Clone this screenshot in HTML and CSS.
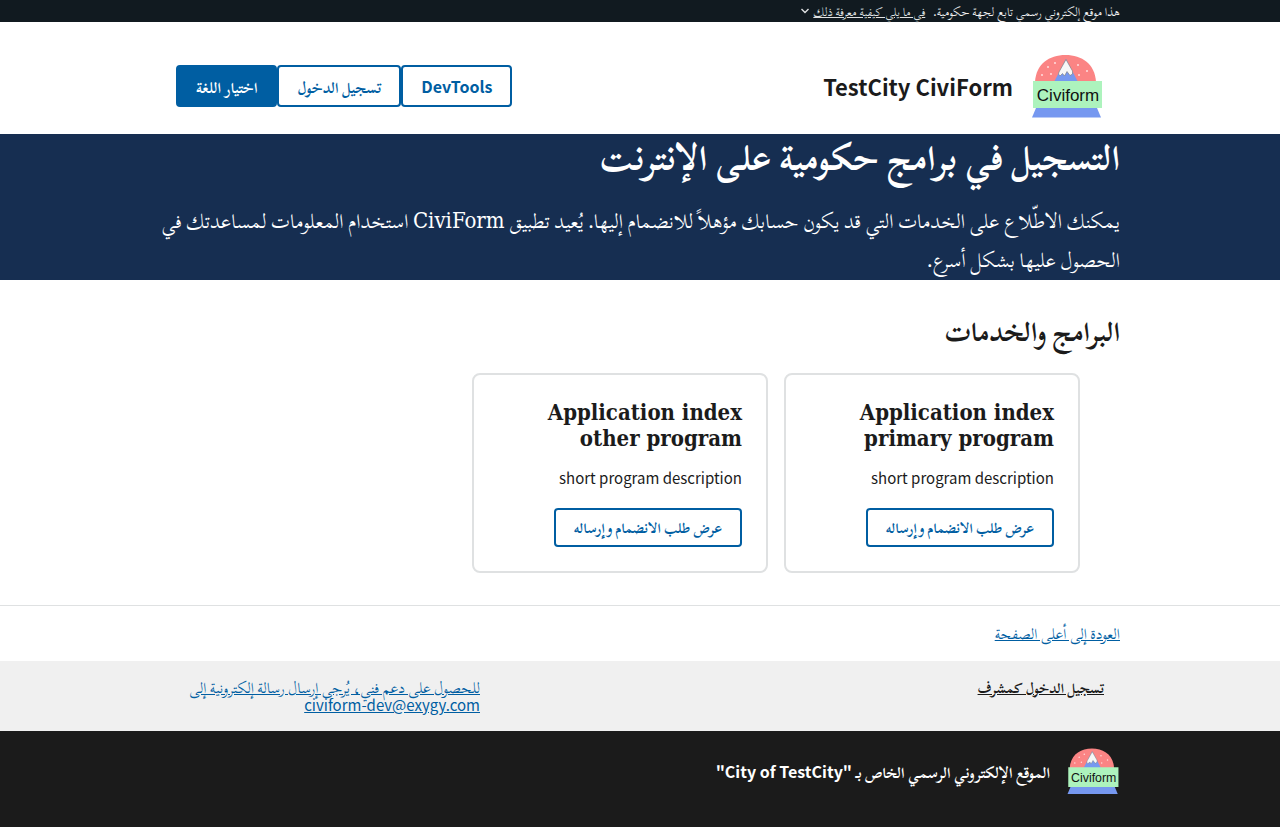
FILE: index.html
```html
<!DOCTYPE html>
<html lang="ar" dir="rtl">
<head>
<meta charset="utf-8">
<meta name="viewport" content="width=device-width, initial-scale=1">
<title>TestCity CiviForm</title>
<link rel="stylesheet" href="styles.css">
</head>
<body>
<div class="banner">
  <div class="container banner-row">
    <span>هذا موقع إلكتروني رسمي تابع لجهة حكومية.</span>
    <button type="button" class="banner-toggle"><span>في ما يلي كيفية معرفة ذلك</span><svg viewBox="0 0 8 6" width="8" height="6" aria-hidden="true"><path d="M.5 1 4 4.500 7.500 1" fill="none" stroke="currentColor" stroke-width="1.400"/></svg></button>
  </div>
</div>
<header class="container header">
  <a href="#" class="brand">
    <svg class="logo" viewBox="0 0 72 66" role="img" aria-label="Civiform">
      <path d="M4 29C5 11 18 2 34.500 2S64 11 65 29z" fill="#fb8484"/>
      <path d="M23 29 35 6l12 23z" fill="#7698f0"/>
      <path d="m28 19 7-12.500L41.500 18v3l-2.500 1.500-3-4-2.500 4.500-2-2.500-2.500 2.500-1.500-2z" fill="#f7f7f7" stroke="#777" stroke-width=".6"/>
      <g fill="#ffdede"><circle cx="24" cy="10" r="1"/><circle cx="17" cy="14" r="1"/><circle cx="20" cy="21" r="1"/><circle cx="11" cy="22" r="1"/><circle cx="47" cy="12" r="1"/><circle cx="56" cy="18" r="1"/><circle cx="48" cy="22" r="1"/></g>
      <path d="M5 55h61l4 9.500H1z" fill="#7698f0"/>
      <path d="M2 28h69v27H2z" fill="#adf3bd"/>
      <text x="37" y="48" text-anchor="middle" direction="ltr" class="logo-text">Civiform</text>
    </svg>
    <span>TestCity CiviForm</span>
  </a>
  <nav class="actions">
    <button type="button" class="button latin">DevTools</button>
    <button type="button" class="button">تسجيل الدخول</button>
    <button type="button" class="button solid">اختيار اللغة</button>
  </nav>
</header>
<main>
  <section class="hero">
    <div class="container">
      <h1>التسجيل في برامج حكومية على الإنترنت</h1>
      <p>يمكنك الاطّلاع على الخدمات التي قد يكون حسابك مؤهلاً للانضمام إليها. يُعيد تطبيق <span class="product">CiviForm</span> استخدام المعلومات لمساعدتك في الحصول عليها بشكل أسرع.</p>
    </div>
  </section>
  <section class="container programs">
    <h2>البرامج والخدمات</h2>
    <ul class="cards">
      <li class="card">
        <h3>Application index primary program</h3>
        <p>short program description</p>
        <a href="#" class="button">عرض طلب الانضمام وإرساله</a>
      </li>
      <li class="card">
        <h3>Application index other program</h3>
        <p>short program description</p>
        <a href="#" class="button">عرض طلب الانضمام وإرساله</a>
      </li>
    </ul>
  </section>
</main>
<footer>
  <div class="return"><div class="container"><a href="#">العودة إلى أعلى الصفحة</a></div></div>
  <div class="links">
    <div class="container links-row">
      <a href="#" class="admin">تسجيل الدخول كمشرف</a>
      <a href="#" class="support">للحصول على دعم فني، يُرجى إرسال رسالة إلكترونية إلى <span class="email">civiform-dev@exygy.com</span></a>
    </div>
  </div>
  <div class="identity">
    <div class="container identity-row">
      <svg class="logo small" viewBox="0 0 72 66" role="img" aria-label="Civiform">
        <path d="M4 29C5 11 18 2 34.500 2S64 11 65 29z" fill="#fb8484"/>
        <path d="M23 29 35 6l12 23z" fill="#7698f0"/>
        <path d="m28 19 7-12.500L41.500 18v3l-2.500 1.500-3-4-2.500 4.500-2-2.500-2.500 2.500-1.500-2z" fill="#f7f7f7" stroke="#777" stroke-width=".6"/>
        <g fill="#ffdede"><circle cx="24" cy="10" r="1"/><circle cx="17" cy="14" r="1"/><circle cx="20" cy="21" r="1"/><circle cx="11" cy="22" r="1"/><circle cx="47" cy="12" r="1"/><circle cx="56" cy="18" r="1"/><circle cx="48" cy="22" r="1"/></g>
        <path d="M5 55h61l4 9.500H1z" fill="#7698f0"/>
        <path d="M2 28h69v27H2z" fill="#adf3bd"/>
        <text x="37" y="48" text-anchor="middle" direction="ltr" class="logo-text">Civiform</text>
      </svg>
      <p>الموقع الإلكتروني الرسمي الخاص بـ <span class="latin">"City of TestCity"</span></p>
    </div>
  </div>
</footer>
</body>
</html>
```
FILE: styles.css
```css
* { box-sizing: border-box; }
body {
  margin: 0;
  color: #1b1b1b;
  background: #fff;
  font-family: "Noto Sans CJK SC", "Scheherazade New", Scheherazade, Amiri, "Droid Arabic Naskh", "Noto Naskh Arabic", serif;
  font-size: 15px;
  line-height: 18px;
}
h1, h2, h3, p { margin: 0; }
a { color: #005ea2; }
.container { max-width: 1024px; margin: 0 auto; padding: 0 32px; }

.banner { background: #111a20; color: #f0f0f0; font-size: 12px; line-height: 14px; }
.banner-row { display: flex; gap: 8px; padding-top: 4px; padding-bottom: 4px; }
.banner-toggle {
  display: flex;
  align-items: center;
  gap: 4px;
  padding: 0;
  border: 0;
  background: none;
  color: #dfe1e2;
  font: inherit;
}
.banner-toggle span { text-decoration: underline; }

.header { display: flex; align-items: center; justify-content: space-between; padding-top: 31px; padding-bottom: 15px; }
.brand {
  display: flex;
  align-items: center;
  gap: 18px;
  padding-right: 17px;
  color: #1b1b1b;
  font-size: 22px;
  font-weight: 700;
  text-decoration: none;
}
.logo { width: 72px; height: 66px; flex: none; }
.logo-text { font: 17px "Liberation Sans", sans-serif; fill: #111; }
.actions { display: flex; padding-left: 16px; }
.button {
  display: inline-block;
  padding: 8px 18px;
  border: 2px solid #005ea2;
  border-radius: 4px;
  background: #fff;
  color: #005ea2;
  font: inherit;
  font-weight: 700;
  line-height: 19px;
  text-decoration: none;
}
.actions .button { height: 42px; }
.latin, .actions .latin { font-size: 16px; }
.button.solid { background: #005ea2; color: #fff; }

.hero { padding-bottom: 2px; background: #162e51; color: #fff; }
.hero h1 { font-size: 35px; line-height: 42px; }
.hero p { padding-top: 24px; font-size: 20px; line-height: 39px; }
.product { font-family: "DejaVu Serif Condensed", serif; font-size: 22px; line-height: 24px; }

.programs { padding-top: 32px; padding-bottom: 32px; }
.programs h2 { font-size: 27px; line-height: 36px; }
.cards { display: flex; flex-wrap: wrap; gap: 16px; margin: 25px 0 0; padding: 0 40px; list-style: none; }
.card {
  display: flex;
  flex-direction: column;
  align-items: flex-start;
  width: 296px;
  padding: 24px;
  border: 2px solid #dfe1e2;
  border-radius: 8px;
}
.card h3 { font-family: "DejaVu Serif Condensed", serif; font-size: 22px; line-height: 26px; }
.card p { margin: 14px 0 17px; line-height: 26px; }
.card .button { font-size: 14px; }

.return { border-top: 1px solid #dfe1e2; padding: 18px 0 19px; }
.links { background: #f0f0f0; }
.links-row { display: flex; justify-content: space-between; padding: 17px 48px; }
.admin { color: #1b1b1b; font-size: 14px; font-weight: 700; }
.support { width: 304px; }
.email { display: block; }
.identity { background: #1b1b1b; color: #fff; font-weight: 700; }
.identity-row { display: flex; align-items: center; gap: 16px; padding-top: 16px; padding-bottom: 32px; }
.logo.small { width: 54px; height: 48px; }
```
